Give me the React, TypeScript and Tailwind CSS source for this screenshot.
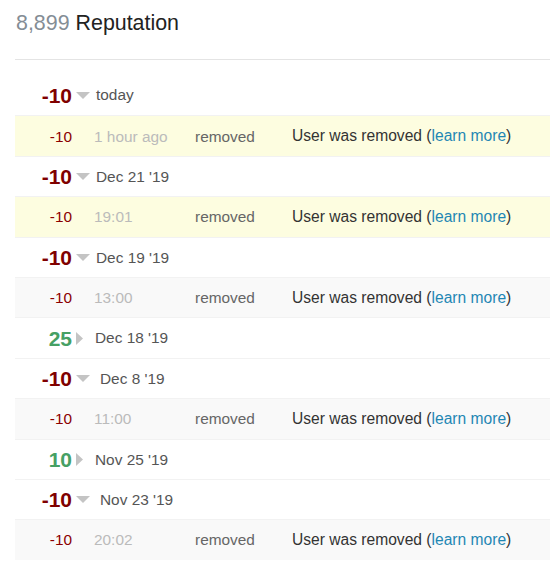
import React from "react";

type DayRow = {
  kind: "day";
  amount: number;
  date: string;
  gap: string;
};

type EventRow = {
  kind: "event";
  amount: number;
  time: string;
  tone: "new" | "old";
};

const rows: (DayRow | EventRow)[] = [
  { kind: "day", amount: -10, date: "today", gap: "ml-[6px]" },
  { kind: "event", amount: -10, time: "1 hour ago", tone: "new" },
  { kind: "day", amount: -10, date: "Dec 21 '19", gap: "ml-[6px]" },
  { kind: "event", amount: -10, time: "19:01", tone: "new" },
  { kind: "day", amount: -10, date: "Dec 19 '19", gap: "ml-[6px]" },
  { kind: "event", amount: -10, time: "13:00", tone: "old" },
  { kind: "day", amount: 25, date: "Dec 18 '19", gap: "ml-[12px]" },
  { kind: "day", amount: -10, date: "Dec 8 '19", gap: "ml-[10px]" },
  { kind: "event", amount: -10, time: "11:00", tone: "old" },
  { kind: "day", amount: 10, date: "Nov 25 '19", gap: "ml-[12px]" },
  { kind: "day", amount: -10, date: "Nov 23 '19", gap: "ml-[10px]" },
  { kind: "event", amount: -10, time: "20:02", tone: "old" },
];

function Arrow({ open }: { open: boolean }) {
  if (open) {
    return (
      <svg width="14" height="7" viewBox="0 0 14 7" className="ml-[4px] shrink-0">
        <path d="M0 0 L14 0 L7 7 Z" fill="#c4c4c4" />
      </svg>
    );
  }
  return (
    <svg width="7" height="13" viewBox="0 0 7 13" className="ml-[4px] shrink-0">
      <path d="M0 0 L7 6.5 L0 13 Z" fill="#c4c4c4" />
    </svg>
  );
}

function Day({ row, first }: { row: DayRow; first: boolean }) {
  const positive = row.amount > 0;
  return (
    <div
      className={`flex h-[40.4px] items-center bg-white ${
        first ? "" : "border-t border-[#f2f2f2]"
      }`}
    >
      <div
        className={`w-[57px] text-right text-[21px] font-bold leading-none ${
          positive ? "text-[#46a064]" : "text-[#800000]"
        }`}
      >
        {row.amount}
      </div>
      <Arrow open={!positive} />
      <div className={`${row.gap} text-[15.4px] leading-none text-[#555]`}>{row.date}</div>
    </div>
  );
}

function Event({ row }: { row: EventRow }) {
  return (
    <div
      className={`flex h-[40.4px] items-center border-t border-[#f2f2f2] text-[15.4px] ${
        row.tone === "new" ? "bg-[#fdfde0]" : "bg-[#f9f9f9]"
      }`}
    >
      <div className="w-[57px] text-right text-[#8b0000]">{row.amount}</div>
      <div className="ml-[22px] w-[101px] text-[#bbbbbb]">{row.time}</div>
      <div className="w-[97px] text-[#666]">removed</div>
      <div className="text-[15.6px] text-[#333]">
        User was removed (<a className="text-[#1f87b4]">learn more</a>)
      </div>
    </div>
  );
}

export default function App() {
  return (
    <div
      className="h-[561px] w-[550px] overflow-hidden bg-white pl-[15px]"
      style={{ fontFamily: '"Liberation Sans", Arial, sans-serif' }}
    >
      <div className="flex h-[60px] items-start border-b border-[#e4e4e4] pt-[11px] text-[21.4px] leading-[24px]">
        <span className="ml-px text-[#848d95]">8,899</span>
        <span className="ml-[6px] text-[#222]">Reputation</span>
      </div>
      <div className="mt-[15px]">
        {rows.map((r, i) =>
          r.kind === "day" ? (
            <Day key={i} row={r} first={i === 0} />
          ) : (
            <Event key={i} row={r} />
          )
        )}
      </div>
    </div>
  );
}
